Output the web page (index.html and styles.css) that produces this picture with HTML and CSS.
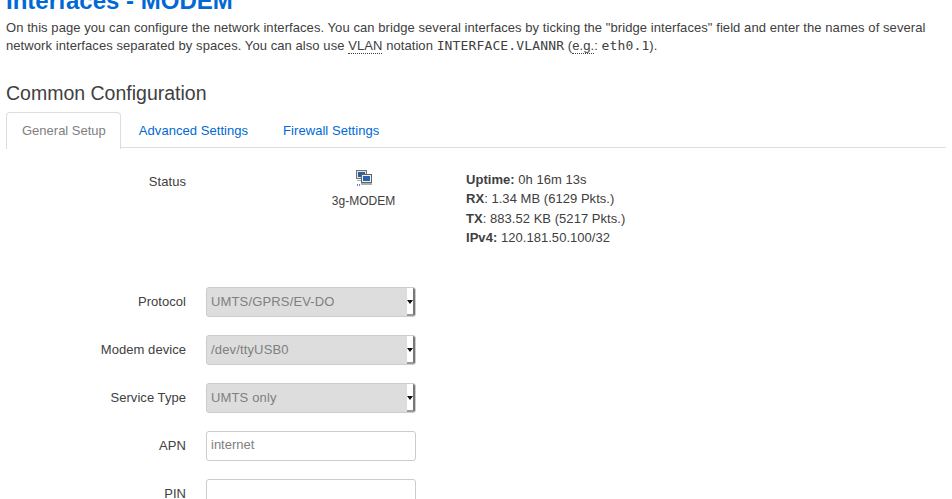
FILE: index.html
```html
<!DOCTYPE html>
<html lang="en">
<head>
<meta charset="utf-8">
<title>Interfaces - MODEM</title>
<link rel="stylesheet" href="styles.css">
</head>
<body>
<div class="page">
  <h2 class="title">Interfaces - MODEM</h2>
  <p class="intro">On this page you can configure the network interfaces. You can bridge several interfaces by ticking the "bridge interfaces" field and enter the names of several network interfaces separated by spaces. You can also use <abbr>VLAN</abbr> notation <code>INTERFACE.VLANNR</code> (<abbr>e.g.</abbr>: <code>eth0.1</code>).</p>
  <h3 class="section">Common Configuration</h3>
  <ul class="tabs">
    <li class="tab active">General Setup</li>
    <li class="tab">Advanced Settings</li>
    <li class="tab">Firewall Settings</li>
  </ul>
  <div class="row status-row">
    <div class="label">Status</div>
    <div class="device">
      <svg class="device-icon" width="16" height="16" viewBox="0 0 16 16">
        <rect x="0.5" y="0.5" width="10" height="8" fill="#e4e8ec" stroke="#6d7278"/>
        <rect x="2" y="2" width="7" height="5" fill="#2f5d9c"/>
        <rect x="5.5" y="4.5" width="10" height="8" fill="#eef1f4" stroke="#5e6368"/>
        <rect x="7" y="6" width="7" height="5" fill="#2a62ad"/>
        <rect x="5" y="13" width="11" height="2" fill="#a9adb0"/>
        <rect x="1" y="10" width="4" height="1" fill="#a9adb0"/>
        <rect x="1" y="14" width="1" height="2" fill="#4f8fd0"/>
        <rect x="3" y="14" width="1" height="2" fill="#4f8fd0"/>
      </svg>
      <span class="device-name">3g-MODEM</span>
    </div>
    <div class="stats">
      <div><b>Uptime:</b> 0h 16m 13s</div>
      <div><b>RX</b>: 1.34 MB (6129 Pkts.)</div>
      <div><b>TX</b>: 883.52 KB (5217 Pkts.)</div>
      <div><b>IPv4:</b> 120.181.50.100/32</div>
    </div>
  </div>
  <div class="row">
    <div class="label">Protocol</div>
    <div class="select"><span class="select-text">UMTS/GPRS/EV-DO</span><span class="select-arrow"></span></div>
  </div>
  <div class="row">
    <div class="label">Modem device</div>
    <div class="select"><span class="select-text">/dev/ttyUSB0</span><span class="select-arrow"></span></div>
  </div>
  <div class="row">
    <div class="label">Service Type</div>
    <div class="select"><span class="select-text">UMTS only</span><span class="select-arrow"></span></div>
  </div>
  <div class="row">
    <div class="label">APN</div>
    <input class="text-input" type="text" value="internet">
  </div>
  <div class="row">
    <div class="label">PIN</div>
    <input class="text-input" type="text">
  </div>
</div>
</body>
</html>
```
FILE: styles.css
```css
html, body {
  margin: 0;
  padding: 0;
  height: 499px;
  overflow: hidden;
  background: #fff;
}
.page {
  padding: 0 6px;
  font-family: "Liberation Sans", Arial, sans-serif;
  font-size: 13px;
  line-height: 18px;
  color: #404040;
  width: 940px;
}
.title {
  margin: -14px 0 0;
  font-size: 24px;
  line-height: 30px;
  font-weight: bold;
  color: #0069d6;
}
.intro {
  margin: 3px 0 0;
  letter-spacing: 0.07px;
}
abbr {
  border-bottom: 1px dotted #404040;
}
code {
  font-family: "DejaVu Sans Mono", monospace;
  font-size: 13px;
  letter-spacing: 0.14px;
}
.section {
  margin: 26px 0 0;
  font-size: 19.5px;
  line-height: 24px;
  font-weight: normal;
}
.tabs {
  list-style: none;
  margin: 7px 0 0;
  padding: 0;
  display: flex;
  border-bottom: 1px solid #ddd;
  height: 35px;
}
.tab {
  padding: 0 15px;
  margin-right: 3px;
  line-height: 35px;
  height: 35px;
  color: #0069d6;
  border: 1px solid transparent;
  border-bottom: 0;
  letter-spacing: 0.05px;
}
.tab.active {
  color: #808080;
  background: #fff;
  border-color: #ddd;
  border-radius: 4px 4px 0 0;
  height: 36px;
  padding-right: 14px;
  margin-right: 2px;
  letter-spacing: 0;
}
.row {
  display: flex;
  align-items: center;
  height: 30px;
  margin-bottom: 18px;
}
.status-row {
  align-items: flex-start;
  height: auto;
  margin-top: 22px;
  margin-bottom: 39px;
}
.label {
  width: 180px;
  text-align: right;
  flex: none;
  letter-spacing: 0.05px;
}
.status-row .label {
  padding-top: 3px;
}
.device {
  margin-left: 138px;
  width: 79px;
  display: flex;
  flex-direction: column;
  align-items: center;
  flex: none;
  font-size: 12px;
}
.device-icon {
  display: block;
  margin-bottom: 8px;
}
.device-name {
  line-height: 14px;
}
.stats {
  margin-left: 63px;
  line-height: 19.4px;
  letter-spacing: 0.04px;
}
.select {
  width: 210px;
  height: 30px;
  box-sizing: border-box;
  margin-left: 20px;
  display: flex;
  align-items: stretch;
  background: #ddd;
  border: 1px solid #ccc;
  border-radius: 3px;
  color: #808080;
  overflow: hidden;
}
.select-text {
  flex: 1;
  padding-left: 4px;
  line-height: 28px;
  letter-spacing: 0.15px;
}
.select-arrow {
  width: 6px;
  background: #fff;
  border-right: 2px solid #777;
  border-bottom: 2px solid #999;
  position: relative;
}
.select-arrow::after {
  content: "";
  position: absolute;
  right: 0;
  top: 12px;
  border-top: 4px solid #111;
  border-left: 3px solid transparent;
  border-right: 3px solid transparent;
}
.text-input {
  width: 210px;
  height: 30px;
  box-sizing: border-box;
  margin: 0 0 0 20px;
  padding: 3px 4px 5px;
  background: #fff;
  border: 1px solid #ccc;
  border-radius: 3px;
  font-family: "Liberation Sans", Arial, sans-serif;
  font-size: 13px;
  color: #808080;
  outline: 0;
}
```
